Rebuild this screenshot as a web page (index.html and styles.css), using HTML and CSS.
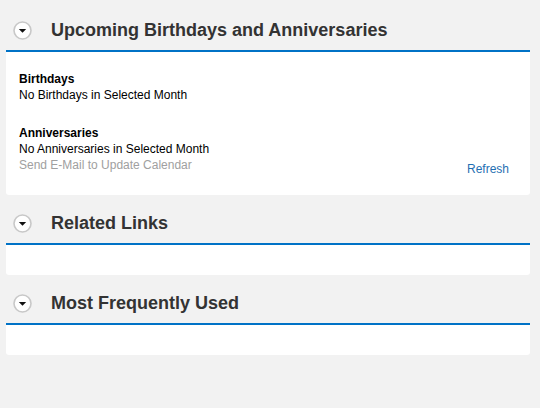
FILE: index.html
```html
<!DOCTYPE html>
<html lang="en">

<head>
    <meta charset="UTF-8">
    <meta name="viewport" content="width=device-width, initial-scale=1.0">
    <title>Home</title>
    <link rel="stylesheet" href="styles.css">
</head>

<body>
    <div class="painel">
        <section class="bloco primeiro">
            <header class="cabecalho">
                <span class="seta">
                    <svg width="19" height="19" viewBox="0 0 19 19">
                        <circle cx="9.5" cy="9.5" r="8.5" fill="#fff" stroke="#c8c8c8" stroke-width="1.6"/>
                        <path d="M5.8 8 L13.2 8 L9.5 11.8 Z" fill="#111"/>
                    </svg>
                </span>
                <h2>Upcoming Birthdays and Anniversaries</h2>
            </header>
            <div class="conteudo">
                <div class="grupo">
                    <h3>Birthdays</h3>
                    <p>No Birthdays in Selected Month</p>
                </div>
                <div class="grupo">
                    <h3>Anniversaries</h3>
                    <p>No Anniversaries in Selected Month</p>
                    <div class="rodape">
                        <span class="cinza">Send E-Mail to Update Calendar</span>
                        <a href="#" class="link">Refresh</a>
                    </div>
                </div>
            </div>
        </section>

        <section class="bloco">
            <header class="cabecalho">
                <span class="seta">
                    <svg width="19" height="19" viewBox="0 0 19 19">
                        <circle cx="9.5" cy="9.5" r="8.5" fill="#fff" stroke="#c8c8c8" stroke-width="1.6"/>
                        <path d="M5.8 8 L13.2 8 L9.5 11.8 Z" fill="#111"/>
                    </svg>
                </span>
                <h2>Related Links</h2>
            </header>
            <div class="conteudo vazio"></div>
        </section>

        <section class="bloco">
            <header class="cabecalho">
                <span class="seta">
                    <svg width="19" height="19" viewBox="0 0 19 19">
                        <circle cx="9.5" cy="9.5" r="8.5" fill="#fff" stroke="#c8c8c8" stroke-width="1.6"/>
                        <path d="M5.8 8 L13.2 8 L9.5 11.8 Z" fill="#111"/>
                    </svg>
                </span>
                <h2>Most Frequently Used</h2>
            </header>
            <div class="conteudo vazio"></div>
        </section>
    </div>
</body>

</html>
```

FILE: styles.css
```css
/* pagina */
body {
    margin: 0;
    padding: 0;
    background-color: #f2f2f2;
    font-family: "Liberation Sans", Arial, sans-serif;
    font-size: 12px;
    color: #000;
}

.painel {
    width: 524px;
    margin-left: 6px;
}

.bloco {
    margin-top: 8px;
}

.primeiro {
    margin-top: 10px;
}

.cabecalho {
    height: 40px;
    display: flex;
    align-items: center;
    border-bottom: 2px solid #0072c6;
}

.seta {
    display: flex;
    margin-left: 7px;
    margin-right: 19px;
}

.cabecalho h2 {
    margin: 0;
    font-size: 18px;
    font-weight: bold;
    color: #333;
}

.conteudo {
    background-color: #fff;
    border-radius: 0 0 3px 3px;
    padding: 19px 21px 18px 13px;
}

.vazio {
    height: 30px;
    padding: 0;
}

.grupo h3 {
    margin: 0;
    font-size: 12px;
    line-height: 16px;
    font-weight: bold;
}

.grupo p {
    margin: 0;
    line-height: 16px;
}

.grupo + .grupo {
    margin-top: 22px;
}

.rodape {
    display: flex;
    justify-content: space-between;
    line-height: 16px;
}

.cinza {
    color: #a0a0a0;
}

.link {
    color: #1f6fb2;
    text-decoration: none;
    padding-top: 4px;
}
```
